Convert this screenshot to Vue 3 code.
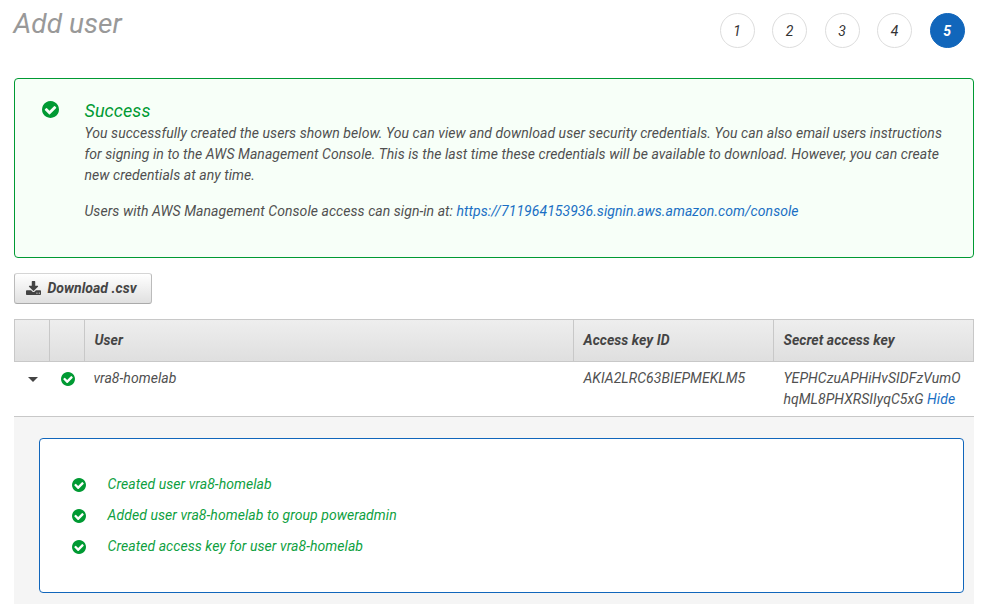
<script setup>
import { h } from 'vue'

const steps = [1, 2, 3, 4, 5]
const current = 5
const events = [
  'Created user vra8-homelab',
  'Added user vra8-homelab to group poweradmin',
  'Created access key for user vra8-homelab',
]

const checkPath =
  'M1412 734q0-28-18-46l-91-90q-19-19-45-19t-45 19l-408 407-226-226q-19-19-45-19t-45 19l-91 90q-18 18-18 46 0 27 18 45l362 362q19 19 45 19 27 0 46-19l543-543q18-18 18-45zm252 162q0 209-103 385.5t-279.5 279.5-385.5 103-385.5-103-279.5-279.5-103-385.5 103-385.5 279.5-279.5 385.5-103 385.5 103 279.5 279.5 103 385.5z'

const CheckIcon = () =>
  h('svg', { viewBox: '128 128 1536 1536', 'aria-hidden': 'true' }, [
    h('path', { d: checkPath, fill: '#009a33' }),
  ])
</script>

<template>
  <main class="page">
    <header class="head">
      <h1>Add user</h1>
      <ol class="steps">
        <li v-for="s in steps" :key="s" :class="{ active: s === current }">{{ s }}</li>
      </ol>
    </header>

    <section class="notice">
      <CheckIcon class="icon-lg" />
      <div>
        <h2>Success</h2>
        <p>You successfully created the users shown below. You can view and download user security credentials. You can also email users instructions for signing in to the AWS Management Console. This is the last time these credentials will be available to download. However, you can create new credentials at any time.</p>
        <p class="signin">Users with AWS Management Console access can sign-in at: <a>https://711964153936.signin.aws.amazon.com/console</a></p>
      </div>
    </section>

    <button class="download" type="button">
      <svg viewBox="64 0 1664 1536" aria-hidden="true">
        <path fill="#444" d="M1344 1344q0-26-19-45t-45-19-45 19-19 45 19 45 45 19 45-19 19-45zm256 0q0-26-19-45t-45-19-45 19-19 45 19 45 45 19 45-19 19-45zm128-224v320q0 40-28 68t-68 28h-1472q-40 0-68-28t-28-68v-320q0-40 28-68t68-28h465l135 136q58 56 136 56t136-56l136-136h464q40 0 68 28t28 68zm-325-569q17 41-14 70l-448 448q-18 19-45 19t-45-19l-448-448q-31-29-14-70 17-39 59-39h256v-448q0-26 19-45t45-19h256q26 0 45 19t19 45v448h256q42 0 59 39z" />
      </svg>
      <span>Download .csv</span>
    </button>

    <section class="table">
      <div class="row thead">
        <div></div>
        <div></div>
        <div>User</div>
        <div>Access key ID</div>
        <div>Secret access key</div>
      </div>
      <div class="row body">
        <div class="toggle"><i class="caret"></i></div>
        <div class="status"><CheckIcon class="icon-sm" /></div>
        <div class="name">vra8-homelab</div>
        <div>AKIA2LRC63BIEPMEKLM5</div>
        <div>YEPHCzuAPHiHvSIDFzVumO<br />hqML8PHXRSIIyqC5xG <a>Hide</a></div>
      </div>
      <div class="detail">
        <ul>
          <li v-for="e in events" :key="e"><CheckIcon class="icon-sm" /><span>{{ e }}</span></li>
        </ul>
      </div>
    </section>
  </main>
</template>

<style>
body {
  margin: 0;
  background: #fff;
}
</style>

<style scoped>
.page {
  box-sizing: border-box;
  width: 987px;
  height: 604px;
  overflow: hidden;
  padding: 0 13px 0 14px;
  font: italic 14px/21px Roboto, "Liberation Sans", sans-serif;
  letter-spacing: 0.056px;
  color: #505050;
}
.head {
  display: flex;
  justify-content: space-between;
  height: 78px;
}
h1 {
  margin: 7px 0 0 -0.5px;
  font-size: 28px;
  line-height: 34px;
  font-weight: 400;
  color: #999;
}
.steps {
  display: flex;
  gap: 17.5px;
  list-style: none;
  margin: 13px 9.3px 0 0;
  padding: 0;
}
.steps li {
  box-sizing: border-box;
  width: 35px;
  height: 35px;
  border: 1px solid #ddd;
  border-radius: 50%;
  line-height: 34px;
  text-align: center;
  color: #333;
}
.steps .active {
  background: #1166bb;
  border-color: #1166bb;
  color: #fff;
  font-weight: 700;
}
.notice {
  box-sizing: border-box;
  height: 180px;
  display: flex;
  align-items: flex-start;
  padding: 21px 22px 0 27px;
  border: 1px solid #009a33;
  border-radius: 4px;
  background: #f7fff8;
}
.icon-lg {
  flex: none;
  width: 17px;
  height: 17px;
  margin: 1px 25.5px 0 0;
}
.icon-sm {
  flex: none;
  width: 14px;
  height: 14px;
}
h2 {
  margin: 0 0 1px;
  font-size: 18px;
  line-height: 22px;
  font-weight: 400;
  color: #009a33;
}
p {
  margin: 0;
}
.signin {
  margin-top: 15px;
}
a {
  color: #1a6fc4;
}
.download {
  box-sizing: border-box;
  display: flex;
  align-items: center;
  width: 138px;
  height: 31px;
  margin: 15px 0;
  padding: 0 0 1px 11px;
  border: 1px solid #bbb;
  border-top-color: #d5d5d5;
  border-bottom-color: #aaa;
  border-radius: 3px;
  background: linear-gradient(#fff, #e0e0e0);
  font: inherit;
  font-weight: 700;
  letter-spacing: 0.04px;
  color: #444;
}
.download svg {
  width: 15px;
  height: 14px;
  margin: -1px 6.5px 0 0;
}
.row {
  display: grid;
  grid-template-columns: 35px 35px 489px 200px 201px;
}
.thead {
  box-sizing: border-box;
  height: 43px;
  border: 1px solid #c8c8c8;
  background: linear-gradient(#eee, #dfdfdf);
  font-weight: 700;
  letter-spacing: 0.05px;
  color: #444;
  grid-template-columns: 35px 35px 489px 200px 1fr;
}
.thead div {
  padding: 10px 9.5px;
  border-right: 1px solid #c8c8c8;
}
.thead div:last-child {
  border-right: 0;
}
.body {
  height: 54px;
  border-bottom: 1px solid #c8c8c8;
}
.body div {
  padding: 6px 0 0 10.4px;
}
.body .name {
  padding-left: 9.4px;
}
.body .toggle {
  padding: 15px 0 0 14px;
}
.body .status {
  padding: 10px 0 0 12px;
}
.status .icon-sm {
  display: block;
}
.caret {
  display: block;
  width: 0;
  height: 0;
  border: 5px solid transparent;
  border-top-color: #444;
  border-bottom: 0;
}
.detail {
  height: 200px;
  padding: 21px 10px 0 25px;
  background: #f5f5f5;
}
ul {
  box-sizing: border-box;
  display: flex;
  flex-direction: column;
  gap: 10px;
  height: 155px;
  margin: 0;
  padding: 35px 32px;
  border: 1px solid #1166bb;
  border-radius: 4px;
  background: #fff;
  list-style: none;
}
ul li {
  display: flex;
  align-items: center;
  gap: 21.6px;
  color: #0f9f3f;
}
ul .icon-sm {
  margin-top: 1px;
}
</style>
